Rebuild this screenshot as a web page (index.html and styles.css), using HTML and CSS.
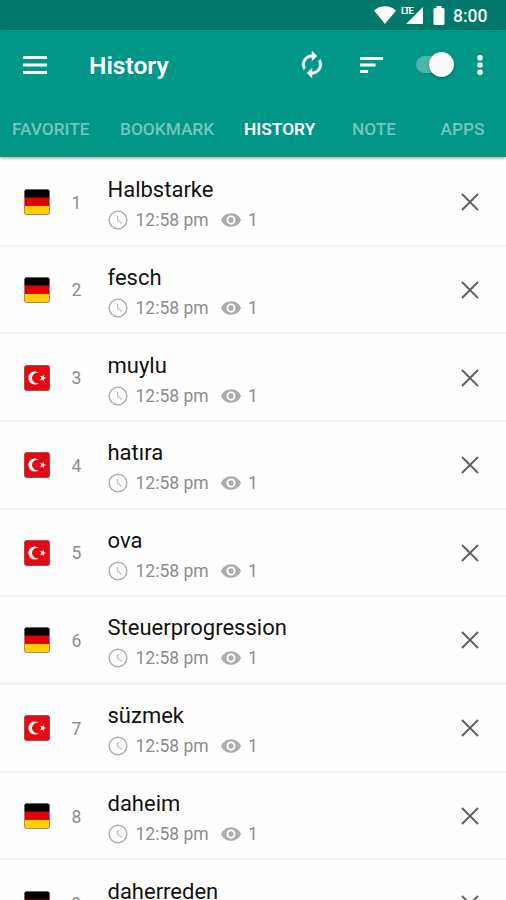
FILE: index.html
```html
<!DOCTYPE html>
<html lang="en">
<head>
<meta charset="utf-8">
<title>History</title>
<link rel="stylesheet" href="styles.css">
</head>
<body>
<svg class="defs" width="0" height="0" aria-hidden="true">
  <symbol id="de" viewBox="0 0 26 26">
    <rect x=".5" y=".5" width="25" height="25" rx="2" fill="#e00000"/>
    <path d="M.5 8.5V2.5a2 2 0 0 1 2-2h21a2 2 0 0 1 2 2v6z" fill="#000"/>
    <path d="M.5 17v6.500a2 2 0 0 0 2 2h21a2 2 0 0 0 2-2V17z" fill="#ffce00"/>
    <rect x=".5" y=".5" width="25" height="25" rx="2" fill="none" stroke="#777" stroke-opacity=".6"/>
  </symbol>
  <symbol id="tr" viewBox="0 0 26 26">
    <rect x=".5" y=".5" width="25" height="25" rx="2" fill="#e30a13" stroke="#a84a4e"/>
    <path d="M15 8A6.500 6.500 0 1 0 15 18A5.300 5.300 0 1 1 15 8z" fill="#fff"/>
    <path d="M22 13l-2.200.9.100 2.300-1.500-1.700-2.200.7 1.200-2.200-1.200-2.200 2.200.7 1.500-1.700-.1 2.300z" fill="#fff"/>
  </symbol>
  <symbol id="clock" viewBox="0 0 20 20">
    <circle cx="10" cy="10" r="8.800" fill="none" stroke="#b0b0b0" stroke-width="1.500"/>
    <path d="M9.500 5.500V10l4 3.300" fill="none" stroke="#bcbcbc" stroke-width="1.300"/>
  </symbol>
  <symbol id="eye" viewBox="1 4.500 22 15">
    <path fill="#acacac" d="M12 4.500C7 4.500 2.730 7.610 1 12c1.730 4.390 6 7.500 11 7.500s9.270-3.110 11-7.500c-1.730-4.390-6-7.500-11-7.500zM12 17c-2.760 0-5-2.240-5-5s2.240-5 5-5 5 2.240 5 5-2.240 5-5 5zm0-8c-1.660 0-3 1.340-3 3s1.340 3 3 3 3-1.340 3-3-1.340-3-3-3z"/>
  </symbol>
  <symbol id="close" viewBox="0 0 18 18">
    <path d="M1 1l16 16M17 1L1 17" fill="none" stroke="#606060" stroke-width="1.900"/>
  </symbol>
</svg>
<div class="statusbar">
  <svg class="wifi" viewBox="0 0 22 18"><path fill="#fff" d="M0 4.500C6-1.200 16-1.200 22 4.500L11 18z"/></svg>
  <div class="signal"><span class="lte">LTE</span><svg viewBox="0 0 17 17"><path fill="#fff" d="M17 0v17H0z"/></svg></div>
  <svg class="battery" viewBox="0 0 12 19"><path fill="#fff" d="M3.500 0h5v2H10a1.500 1.500 0 0 1 1.500 1.500v14A1.500 1.500 0 0 1 10 19H2a1.500 1.500 0 0 1-1.500-1.500v-14A1.500 1.500 0 0 1 2 2h1.500z"/></svg>
  <span class="time">8:00</span>
</div>
<header class="appbar">
  <div class="toolbar">
    <svg class="menu" viewBox="0 0 24 18"><path fill="#fff" d="M0 0h24v3H0zM0 7.500h24v3H0zM0 15h24v3H0z"/></svg>
    <h1 class="title">History</h1>
    <svg class="sync" viewBox="3 1 18 22"><path fill="#fff" stroke="#fff" stroke-width=".4" d="M12 6v3l4-4-4-4v3c-4.420 0-8 3.580-8 8 0 1.570.46 3.030 1.240 4.260L6.700 14.800c-.45-.83-.7-1.790-.7-2.800 0-3.310 2.690-6 6-6zm6.760 1.740L17.300 9.200c.44.84.7 1.790.7 2.800 0 3.310-2.690 6-6 6v-3l-4 4 4 4v-3c4.420 0 8-3.580 8-8 0-1.570-.46-3.030-1.240-4.260z"/></svg>
    <svg class="sort" viewBox="0 0 23 16"><path fill="#fff" d="M0 0h23v3H0zM0 6.500h15.500v3H0zM0 13h8v3H0z"/></svg>
    <div class="switch"><div class="thumb"></div></div>
    <svg class="more" viewBox="0 0 6 20"><g fill="#fff"><circle cx="3" cy="2.800" r="2.800"/><circle cx="3" cy="10" r="2.800"/><circle cx="3" cy="17.200" r="2.800"/></g></svg>
  </div>
  <nav class="tabs"><span class="tab">FAVORITE</span><span class="tab">BOOKMARK</span><span class="tab active">HISTORY</span><span class="tab">NOTE</span><span class="tab">APPS</span></nav>
</header>
<main class="list">
  <div class="row"><svg class="flag"><use href="#de"/></svg><span class="num">1</span><div class="body"><div class="word">Halbstarke</div><div class="meta"><svg class="clock"><use href="#clock"/></svg><span class="at">12:58 pm</span><svg class="eye"><use href="#eye"/></svg><span>1</span></div></div><svg class="close"><use href="#close"/></svg></div>
  <div class="row"><svg class="flag"><use href="#de"/></svg><span class="num">2</span><div class="body"><div class="word">fesch</div><div class="meta"><svg class="clock"><use href="#clock"/></svg><span class="at">12:58 pm</span><svg class="eye"><use href="#eye"/></svg><span>1</span></div></div><svg class="close"><use href="#close"/></svg></div>
  <div class="row"><svg class="flag"><use href="#tr"/></svg><span class="num">3</span><div class="body"><div class="word">muylu</div><div class="meta"><svg class="clock"><use href="#clock"/></svg><span class="at">12:58 pm</span><svg class="eye"><use href="#eye"/></svg><span>1</span></div></div><svg class="close"><use href="#close"/></svg></div>
  <div class="row"><svg class="flag"><use href="#tr"/></svg><span class="num">4</span><div class="body"><div class="word">hatıra</div><div class="meta"><svg class="clock"><use href="#clock"/></svg><span class="at">12:58 pm</span><svg class="eye"><use href="#eye"/></svg><span>1</span></div></div><svg class="close"><use href="#close"/></svg></div>
  <div class="row"><svg class="flag"><use href="#tr"/></svg><span class="num">5</span><div class="body"><div class="word">ova</div><div class="meta"><svg class="clock"><use href="#clock"/></svg><span class="at">12:58 pm</span><svg class="eye"><use href="#eye"/></svg><span>1</span></div></div><svg class="close"><use href="#close"/></svg></div>
  <div class="row thick"><svg class="flag"><use href="#de"/></svg><span class="num">6</span><div class="body"><div class="word">Steuerprogression</div><div class="meta"><svg class="clock"><use href="#clock"/></svg><span class="at">12:58 pm</span><svg class="eye"><use href="#eye"/></svg><span>1</span></div></div><svg class="close"><use href="#close"/></svg></div>
  <div class="row"><svg class="flag"><use href="#tr"/></svg><span class="num">7</span><div class="body"><div class="word">süzmek</div><div class="meta"><svg class="clock"><use href="#clock"/></svg><span class="at">12:58 pm</span><svg class="eye"><use href="#eye"/></svg><span>1</span></div></div><svg class="close"><use href="#close"/></svg></div>
  <div class="row"><svg class="flag"><use href="#de"/></svg><span class="num">8</span><div class="body"><div class="word">daheim</div><div class="meta"><svg class="clock"><use href="#clock"/></svg><span class="at">12:58 pm</span><svg class="eye"><use href="#eye"/></svg><span>1</span></div></div><svg class="close"><use href="#close"/></svg></div>
  <div class="row"><svg class="flag"><use href="#de"/></svg><span class="num">9</span><div class="body"><div class="word">daherreden</div><div class="meta"><svg class="clock"><use href="#clock"/></svg><span class="at">12:58 pm</span><svg class="eye"><use href="#eye"/></svg><span>1</span></div></div><svg class="close"><use href="#close"/></svg></div>
</main>
</body>
</html>
```
FILE: styles.css
```css
* { box-sizing: border-box; }
body {
  margin: 0;
  width: 506px;
  height: 900px;
  overflow: hidden;
  display: flex;
  flex-direction: column;
  background: #fefefe;
  font-family: Roboto, "Liberation Sans", sans-serif;
}
svg { display: block; flex: none; }
.defs { display: none; }

.statusbar {
  flex: none;
  height: 30px;
  padding-right: 18px;
  display: flex;
  justify-content: flex-end;
  align-items: center;
  background: #00796b;
  color: #fff;
}
.wifi { width: 22px; height: 18px; margin-right: 5px; }
.signal { display: flex; align-items: flex-start; width: 22px; height: 18px; margin-right: 10px; }
.signal svg { width: 17px; height: 17px; margin: 1px 0 0 -12px; }
.lte { width: 17px; flex: none; font-size: 9.500px; line-height: 9px; font-weight: 700; letter-spacing: -1.200px; }
.battery { width: 12px; height: 19px; margin-right: 8px; }
.time { width: 35px; font-size: 17.500px; font-weight: 500; line-height: 20px; white-space: nowrap; margin-top: 2px; }

.appbar {
  flex: none;
  height: 127px;
  background: #009688;
  color: #fff;
  box-shadow: 0 1px 3px rgba(0, 0, 0, .4);
  position: relative;
}
.toolbar { height: 69px; padding: 0 23px; display: flex; align-items: center; }
.menu { width: 24px; height: 18px; }
.title { flex: 1; margin: 3px 0 0 42px; font-size: 24.600px; line-height: 30px; font-weight: 600; }
.sync { width: 22px; height: 27px; margin-right: 36.500px; }
.sort { width: 23px; height: 16px; margin-right: 33px; }
.switch {
  width: 38px;
  height: 17px;
  border-radius: 9px;
  background: #4db6ac;
  display: flex;
  align-items: center;
  justify-content: flex-end;
}
.thumb { width: 25px; height: 25px; border-radius: 50%; background: #fafafa; box-shadow: 0 1px 3px rgba(0, 0, 0, .35); }
.more { width: 6px; height: 20px; margin-left: 23.500px; }

.tabs {
  height: 58px;
  padding: 19px 0 0 12px;
  display: grid;
  grid-template-columns: 108px 124px 108px 88.500px 1fr;
  font-size: 17.300px;
  line-height: 22px;
  font-weight: 500;
}
.tab { color: #76c5be; }
.active { color: #fff; font-weight: 600; }

.list { flex: 1; min-height: 0; overflow: hidden; padding-top: 1.900px; }
.row {
  height: 87.700px;
  padding: 0 27px 0 23.500px;
  display: flex;
  align-items: center;
  border-bottom: 2px solid #f5f5f5;
}
.thick { border-bottom-width: 3px; }
.flag { width: 26px; height: 26px; margin-top: 1px; }
.num { width: 24px; margin: 2px 0 0 15px; text-align: center; font-size: 17.500px; line-height: 22px; color: #8c8c8c; }
.body { flex: 1; margin: 4px 0 0 19px; }
.word { font-size: 22px; line-height: 28px; color: #111; }
.meta { display: flex; align-items: center; margin-top: 5px; font-size: 17.500px; line-height: 22px; color: #8c8c8c; }
.clock { width: 20px; height: 20px; margin: 0 8px 0 0; }
.at { width: 73px; margin-right: 12.500px; white-space: nowrap; }
.eye { width: 20px; height: 14px; margin-right: 7px; }
.close { width: 18px; height: 18px; margin-top: 1px; }
```
